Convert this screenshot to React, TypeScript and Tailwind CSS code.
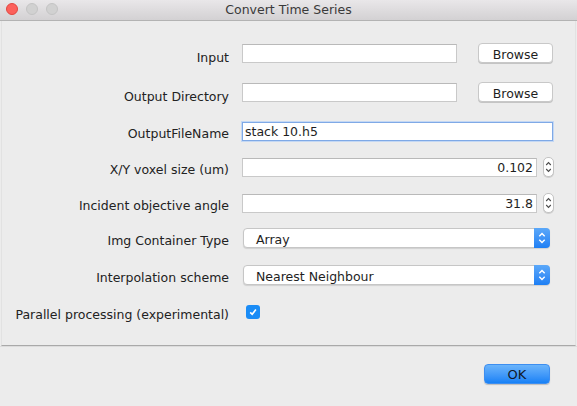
// Convert Time Series dialog (macOS style)

function Spinner() {
  return (
    <div className="ml-[6px] flex h-[20px] w-[11px] flex-col items-center justify-center rounded-[5px] border border-[#c3c3c3] bg-white shadow-[0_1px_0_#d0d0d0]">
      <svg width="7" height="14" viewBox="0 0 7 14" fill="none" stroke="#4a4a4a" strokeWidth="1.1">
        <path d="M1.2 5 L3.5 2.6 L5.8 5" />
        <path d="M1.2 9 L3.5 11.4 L5.8 9" />
      </svg>
    </div>
  );
}

function Combo({ value }: { value: string }) {
  return (
    <div className="ml-[1px] flex h-[20px] w-[307px] items-center rounded-[4px] border border-[#c6c6c6] bg-white shadow-[0_1px_1px_rgba(0,0,0,0.12)]">
      <span className="flex-1 pl-[12px] pt-[2px] text-[12.5px] leading-[15px] text-[#1e1e1e]">{value}</span>
      <div className="-mr-px flex h-[20px] w-[16px] items-center justify-center rounded-r-[4px] bg-gradient-to-b from-[#5ba8f9] to-[#1d7ff4]">
        <svg width="8" height="14" viewBox="0 0 8 14" fill="none" stroke="white" strokeWidth="1.4">
          <path d="M1.3 5.2 L4 2.5 L6.7 5.2" />
          <path d="M1.3 8.8 L4 11.5 L6.7 8.8" />
        </svg>
      </div>
    </div>
  );
}

function BrowseButton() {
  return (
    <button className="ml-[21px] h-[20px] w-[75px] rounded-[4px] border border-[#c8c8c8] bg-white pt-[2px] text-[12.5px] leading-[15px] text-[#1e1e1e] shadow-[0_1px_0_#c4c4c4]">
      Browse
    </button>
  );
}

function Row({
  label,
  top,
  low,
  children,
}: {
  label: string;
  top: string;
  low?: boolean;
  children: React.ReactNode;
}) {
  return (
    <div className={`flex h-[20px] items-center ${top}`}>
      <div
        className={`w-[227px] text-right text-[12.5px] leading-[15px] text-[#222] ${low ? "pt-[9px]" : "pt-[5px]"}`}
      >
        {label}
      </div>
      <div className="ml-[13px] flex items-center">{children}</div>
    </div>
  );
}

const field = "h-[19px] border border-[#c9c9c9] border-t-[#b9b9b9] bg-white text-[12.5px] leading-[17px] text-[#1e1e1e]";

export default function App() {
  return (
    <div
      className="flex h-[406px] w-[577px] flex-col bg-[#ececec]"
      style={{ fontFamily: '"DejaVu Sans", "Liberation Sans", sans-serif' }}
    >
      {/* title bar */}
      <div className="relative flex h-[21px] items-center justify-center border-b border-[#b3b3b3] bg-gradient-to-b from-[#e9e7e9] to-[#d3d1d3]">
        <div className="absolute left-[6px] top-[3px] flex gap-[8px]">
          <div className="h-[12px] w-[12px] rounded-full border border-[#e2463f] bg-[#fc605b]" />
          <div className="h-[12px] w-[12px] rounded-full border border-[#c4c4c4] bg-[#d1d1d1]" />
          <div className="h-[12px] w-[12px] rounded-full border border-[#c4c4c4] bg-[#d1d1d1]" />
        </div>
        <span className="text-[12.5px] text-[#3a3a3a]">Convert Time Series</span>
      </div>

      {/* form panel */}
      <div className="mx-[1px] h-[325px] border-x border-b border-[#e2e2e2] border-b-[#a9a9a9] bg-[#ececec]">
        <Row label="Input" top="mt-[22px]" low>
          <div className={`${field} w-[215px]`} />
          <BrowseButton />
        </Row>
        <Row label="Output Directory" top="mt-[19px]" low>
          <div className={`${field} w-[215px]`} />
          <BrowseButton />
        </Row>
        <Row label="OutputFileName" top="mt-[19px]">
          <div className="h-[19px] w-[311px] border border-[#7fa9e6] bg-white pl-[2px] text-[12.5px] leading-[17px] text-[#1e1e1e] shadow-[0_0_0_1px_#c4d8f4]">
            stack 10.h5
          </div>
        </Row>
        <Row label="X/Y voxel size (um)" top="mt-[16px]">
          <div className={`${field} w-[295px] pr-[3px] text-right`}>0.102</div>
          <Spinner />
        </Row>
        <Row label="Incident objective angle" top="mt-[16px]">
          <div className={`${field} w-[295px] pr-[3px] text-right`}>31.8</div>
          <Spinner />
        </Row>
        <Row label="Img Container Type" top="mt-[15px]">
          <Combo value="Array" />
        </Row>
        <Row label="Interpolation scheme" top="mt-[17px]">
          <Combo value="Nearest Neighbour" />
        </Row>
        <Row label="Parallel processing (experimental)" top="mt-[17px]">
          <div className="ml-[4px] flex h-[14px] w-[14px] items-center justify-center rounded-[3px] bg-[#1a8cf6]">
            <svg width="10" height="10" viewBox="0 0 10 10" fill="none" stroke="white" strokeWidth="1.6">
              <path d="M2.2 5.4 L4.2 7.3 L7.9 2.6" />
            </svg>
          </div>
        </Row>
      </div>

      {/* footer */}
      <div className="flex justify-end border-t border-[#dcdcdc] pr-[27px] pt-[17px]">
        <button className="h-[20px] w-[66px] rounded-[4px] border border-[#3d8ef0] bg-gradient-to-b from-[#6ab4fb] to-[#1581f6] text-[13px] text-[#101828] shadow-[0_1px_1px_rgba(0,0,0,0.2)]">
          OK
        </button>
      </div>
    </div>
  );
}
